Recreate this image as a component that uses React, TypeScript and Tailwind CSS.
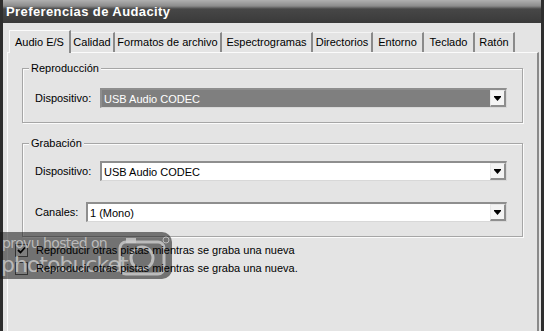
import React from "react";

const tabs = [
  { label: "Audio E/S", w: 62, active: true },
  { label: "Calidad", w: 44 },
  { label: "Formatos de archivo", w: 107 },
  { label: "Espectrogramas", w: 91 },
  { label: "Directorios", w: 60 },
  { label: "Entorno", w: 51 },
  { label: "Teclado", w: 51 },
  { label: "Ratón", w: 40 },
];

function Arrow() {
  return (
    <div className="w-[16px] h-full bg-[#f4f4f4] border-t border-l border-t-[#e8e8e8] border-l-[#e8e8e8] border-r-2 border-b-2 border-r-[#8e8e8e] border-b-[#8e8e8e] flex items-center justify-center">
      <svg width="7" height="5" viewBox="0 0 7 5">
        <rect x="0" y="0" width="7" height="1" fill="#000" />
        <polygon points="0,1 7,1 3.5,5" fill="#000" />
      </svg>
    </div>
  );
}

function Combo({ text, selected, width }: { text: string; selected?: boolean; width: number }) {
  return (
    <div
      className={`flex h-[20px] border-t-2 border-l-2 border-t-[#8e8e8e] border-l-[#8e8e8e] border-r border-b border-r-[#d8d8d8] border-b-[#d8d8d8] ${selected ? "bg-[#7f7f7f]" : "bg-white"}`}
      style={{ width }}
    >
      <div className={`flex-1 pl-[2px] leading-[18px] text-[11px] ${selected ? "text-white" : "text-black"}`}>{text}</div>
      <Arrow />
    </div>
  );
}

function Group({ label, children, className }: { label: string; children: React.ReactNode; className?: string }) {
  return (
    <div className={`relative border border-[#a6a6a6] shadow-[inset_1px_1px_0_#fbfbfb,1px_1px_0_#fbfbfb] ${className ?? ""}`}>
      <div className="absolute left-[6px] top-[-8px] px-[2px] bg-[#e4e4e4] text-[11px] leading-[14px] text-black">{label}</div>
      {children}
    </div>
  );
}

function Check({ checked }: { checked?: boolean }) {
  return (
    <div className="w-[13px] h-[13px] bg-white border border-[#5a5a5a] flex items-center justify-center">
      {checked && (
        <svg className="relative z-20" width="9" height="9" viewBox="0 0 9 9">
          <polyline points="1,4 3.5,6.5 8,1.5" fill="none" stroke="#000" strokeWidth="1.8" />
        </svg>
      )}
    </div>
  );
}

export default function App() {
  return (
    <div className="relative w-[544px] h-[331px] overflow-hidden flex flex-col bg-[#e4e4e4] font-['Liberation_Sans',Arial,sans-serif]">
      {/* title bar */}
      <div className="h-[23px] shrink-0 bg-[linear-gradient(to_bottom,#b0b0b0_0px,#8c8c8c_6px,#474747_9px,#3a3a3a_100%)] flex items-start pl-[3px] pt-[4px] border-l-[3px] border-r-[3px] border-[#2e2e2e]">
        <span className="text-white font-bold text-[13px] leading-[15px] tracking-[0.4px]">Preferencias de Audacity</span>
      </div>
      {/* body */}
      <div className="flex-1 flex flex-col border-l-[3px] border-r-[3px] border-[#2e2e2e] pl-[4px] pr-[2px] pt-[7px]">
        {/* tabs */}
        <div className="flex items-end h-[23px] pl-[2px] relative z-10">
          {tabs.map((t) =>
            t.active ? (
              <div
                key={t.label}
                className="h-[23px] flex items-start justify-center pt-[4px] bg-[#e4e4e4] border-t border-l border-[#fbfbfb] border-r-2 border-r-[#8a8a8a] text-[11px] leading-[15px] text-black"
                style={{ width: t.w }}
              >
                {t.label}
              </div>
            ) : (
              <div
                key={t.label}
                className="h-[20px] mb-[1px] flex items-start justify-center pt-[2px] border-t border-t-[#f4f4f4] border-r-2 border-r-[#8a8a8a] text-[11px] leading-[15px] text-black"
                style={{ width: t.w }}
              >
                {t.label}
              </div>
            )
          )}
        </div>
        {/* panel */}
        <div className="flex-1 -mt-[1px] border-t border-l border-[#fbfbfb] border-r-2 border-r-[#8a8a8a] pl-[14px] pr-[14px] pt-[15px] flex flex-col">
          <Group label="Reproducción" className="h-[55px] pt-[19px] pl-[12px]">
            <div className="flex items-center">
              <div className="w-[65px] text-[11px] text-black">Dispositivo:</div>
              <Combo text="USB Audio CODEC" selected width={407} />
            </div>
          </Group>
          <Group label="Grabación" className="mt-[20px] h-[94px] pt-[17px] pl-[12px]">
            <div className="flex items-center">
              <div className="w-[65px] text-[11px] text-black">Dispositivo:</div>
              <Combo text="USB Audio CODEC" width={407} />
            </div>
            <div className="flex items-center mt-[21px]">
              <div className="w-[51px] text-[11px] text-black">Canales:</div>
              <Combo text="1 (Mono)" width={421} />
            </div>
          </Group>
          <div className="flex flex-col mt-[7px] -ml-[7px] gap-[5px]">
            <div className="flex items-center gap-[8px] h-[13px]">
              <Check checked />
              <span className="relative z-20 text-[11px] text-black">Reproducir otras pistas mientras se graba una nueva</span>
            </div>
            <div className="flex items-center gap-[8px] h-[13px]">
              <Check />
              <span className="relative z-20 text-[11px] text-black">Reproducir otras pistas mientras se graba una nueva.</span>
            </div>
          </div>
        </div>
      </div>
      {/* photobucket watermark overlay */}
      <div className="absolute z-10 left-0 top-[232px] w-[172px] h-[47px] rounded-r-[10px] bg-[rgba(20,20,20,0.55)] overflow-hidden pointer-events-none">
        <div className="absolute left-[2px] top-[4px] text-[14px] leading-[15px] text-[rgba(205,205,205,0.8)] font-['DejaVu_Sans',sans-serif] tracking-[-0.6px]">
          provu hosted on
        </div>
        <div className="absolute left-[1px] top-[21px] text-[22px] leading-[23px] text-[rgba(205,205,205,0.8)] font-['DejaVu_Sans',sans-serif] tracking-[-1px]">
          photobucket
        </div>
        <svg className="absolute left-[118px] top-[4px]" width="52" height="42" viewBox="0 0 52 42">
          <rect x="2" y="6" width="44" height="32" rx="6" fill="none" stroke="rgba(205,205,205,0.8)" strokeWidth="3" />
          <rect x="8" y="2" width="10" height="5" fill="rgba(205,205,205,0.8)" />
          <circle cx="24" cy="22" r="11" fill="none" stroke="rgba(205,205,205,0.8)" strokeWidth="3" />
          <circle cx="48" cy="4" r="3" fill="none" stroke="rgba(205,205,205,0.8)" strokeWidth="1" />
        </svg>
      </div>
    </div>
  );
}
